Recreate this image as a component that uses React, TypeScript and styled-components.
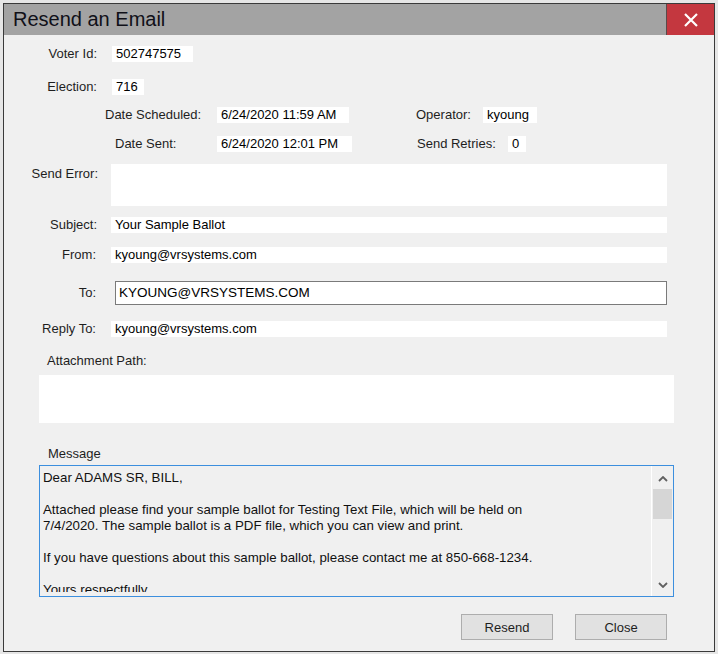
import styled, { createGlobalStyle } from 'styled-components'

const GlobalStyle = createGlobalStyle`
  * { box-sizing: border-box; }
  html, body {
    margin: 0;
    padding: 0;
    background: #e6e6e6;
  }
  body {
    font-family: "Liberation Sans", Arial, sans-serif;
    font-size: 13px;
    color: #1e1e1e;
  }
`

const Page = styled.div`
  padding: 3px;
`

const Window = styled.div`
  width: 712px;
  height: 649px;
  border: 1px solid #3a3a3a;
  display: flex;
  flex-direction: column;
  background: #f0f0f0;
`

const TitleBar = styled.div`
  height: 31px;
  flex: none;
  display: flex;
  align-items: center;
  background: #a3a3a3;
`

const Title = styled.div`
  flex: 1;
  padding-left: 9px;
  font-size: 20px;
  color: #101018;
`

const CloseButton = styled.div`
  width: 48px;
  height: 100%;
  display: flex;
  align-items: center;
  justify-content: center;
  background: #c4373f;
  border-left: 1px solid #5a4a4a;
`

const Body = styled.div`
  flex: 1;
  display: flex;
  flex-direction: column;
`

const Row = styled.div<{ $top: number; $h?: number; $pl?: number; $align?: string }>`
  display: flex;
  align-items: ${p => p.$align ?? 'center'};
  margin-top: ${p => p.$top}px;
  height: ${p => p.$h ?? 16}px;
  padding-left: ${p => p.$pl ?? 0}px;
  flex: none;
`

const Label = styled.span<{ $w?: number; $right?: boolean; $ml?: number; $pt?: number }>`
  flex: none;
  width: ${p => (p.$w ? `${p.$w}px` : 'auto')};
  margin-left: ${p => p.$ml ?? 0}px;
  padding-top: ${p => p.$pt ?? 0}px;
  text-align: ${p => (p.$right ? 'right' : 'left')};
  line-height: 16px;
  white-space: nowrap;
`

const Value = styled.div<{ $w: number; $h?: number; $ml?: number }>`
  flex: none;
  width: ${p => p.$w}px;
  height: ${p => p.$h ?? 16}px;
  margin-left: ${p => p.$ml ?? 0}px;
  background: #ffffff;
  color: #000;
  padding-left: 4px;
  line-height: 16px;
  white-space: nowrap;
  overflow: hidden;
`

const TextBox = styled.div<{ $w: number; $ml: number }>`
  flex: none;
  width: ${p => p.$w}px;
  height: 24px;
  margin-left: ${p => p.$ml}px;
  border: 1px solid #7a7a7a;
  background: #ffffff;
  color: #000;
  padding-left: 3px;
  font-size: 13.5px;
  line-height: 22px;
  white-space: nowrap;
`

const MessageBox = styled.div`
  flex: none;
  display: flex;
  align-items: flex-start;
  margin-top: 3px;
  margin-left: 35px;
  width: 635px;
  height: 132px;
  border: 1px solid #3c8fde;
  background: #f0f0f0;
`

const MessageText = styled.div`
  flex: 1;
  height: 126px;
  padding: 4px 0 0 3px;
  font-size: 13.3px;
  line-height: 16px;
  color: #111;
  white-space: pre;
  overflow: hidden;
`

const ScrollBar = styled.div`
  width: 22px;
  height: 100%;
  flex: none;
  display: flex;
  flex-direction: column;
  border-left: 1px solid #ffffff;
  background: #f0f0f0;
`

const ScrollArrow = styled.div<{ $down?: boolean }>`
  height: 23px;
  display: flex;
  align-items: center;
  justify-content: center;
  padding-top: ${p => (p.$down ? 0 : 2)}px;
  margin-top: ${p => (p.$down ? 'auto' : 0)};
`

const Thumb = styled.div`
  height: 30px;
  margin: 0 1px 0 1px;
  background: #d6d6d6;
`

const ButtonRow = styled.div`
  display: flex;
  justify-content: flex-end;
  gap: 22px;
  margin-top: 17px;
  padding-right: 47px;
`

const Button = styled.div`
  width: 92px;
  height: 26px;
  display: flex;
  align-items: center;
  justify-content: center;
  background: #e1e1e1;
  border: 1px solid #adadad;
  color: #1e1e1e;
`

const Chevron = ({ down }: { down?: boolean }) => (
  <svg width="10" height="6" viewBox="0 0 10 6">
    <path
      d={down ? 'M1 1 L5 5 L9 1' : 'M1 5 L5 1 L9 5'}
      fill="none"
      stroke="#606060"
      strokeWidth="1.8"
    />
  </svg>
)

const message = [
  'Dear ADAMS SR, BILL,',
  '',
  'Attached please find your sample ballot for Testing Text File, which will be held on',
  '7/4/2020. The sample ballot is a PDF file, which you can view and print.',
  '',
  'If you have questions about this sample ballot, please contact me at 850-668-1234.',
  '',
  'Yours respectfully,',
  '',
  'Supervisor of Elections',
].join('\n')

export default function App() {
  return (
    <Page>
      <GlobalStyle />
      <Window>
        <TitleBar>
          <Title>Resend an Email</Title>
          <CloseButton>
            <svg width="16" height="16" viewBox="0 0 16 16">
              <path d="M2 2 L14 14 M14 2 L2 14" stroke="#fff" strokeWidth="2.2" />
            </svg>
          </CloseButton>
        </TitleBar>
        <Body>
          <Row $top={11}>
            <Label $w={93} $right>Voter Id:</Label>
            <Value $w={81} $ml={15}>502747575</Value>
          </Row>
          <Row $top={17}>
            <Label $w={93} $right>Election:</Label>
            <Value $w={32} $ml={15}>716</Value>
          </Row>
          <Row $top={12} $pl={101}>
            <Label $w={112}>Date Scheduled:</Label>
            <Value $w={132}>6/24/2020 11:59 AM</Value>
            <Label $w={67} $ml={67}>Operator:</Label>
            <Value $w={54}>kyoung</Value>
          </Row>
          <Row $top={13} $pl={111}>
            <Label $w={102}>Date Sent:</Label>
            <Value $w={135}>6/24/2020 12:01 PM</Value>
            <Label $w={91} $ml={65}>Send Retries:</Label>
            <Value $w={18}>0</Value>
          </Row>
          <Row $top={12} $h={42} $align="flex-start">
            <Label $w={94} $right $pt={2}>Send Error:</Label>
            <Value $w={556} $h={42} $ml={13} />
          </Row>
          <Row $top={11}>
            <Label $w={93} $right>Subject:</Label>
            <Value $w={556} $ml={14}>Your Sample Ballot</Value>
          </Row>
          <Row $top={14}>
            <Label $w={92} $right>From:</Label>
            <Value $w={556} $ml={15}>kyoung@vrsystems.com</Value>
          </Row>
          <Row $top={18} $h={24}>
            <Label $w={92} $right>To:</Label>
            <TextBox $w={552} $ml={19}>KYOUNG@VRSYSTEMS.COM</TextBox>
          </Row>
          <Row $top={16}>
            <Label $w={92} $right>Reply To:</Label>
            <Value $w={556} $ml={15}>kyoung@vrsystems.com</Value>
          </Row>
          <Row $top={16} $pl={43}>
            <Label>Attachment Path:</Label>
          </Row>
          <Row $top={6} $h={48}>
            <Value $w={635} $h={48} $ml={35} />
          </Row>
          <Row $top={23} $pl={44}>
            <Label>Message</Label>
          </Row>
          <MessageBox>
            <MessageText>{message}</MessageText>
            <ScrollBar>
              <ScrollArrow>
                <Chevron />
              </ScrollArrow>
              <Thumb />
              <ScrollArrow $down>
                <Chevron down />
              </ScrollArrow>
            </ScrollBar>
          </MessageBox>
          <ButtonRow>
            <Button>Resend</Button>
            <Button>Close</Button>
          </ButtonRow>
        </Body>
      </Window>
    </Page>
  )
}
